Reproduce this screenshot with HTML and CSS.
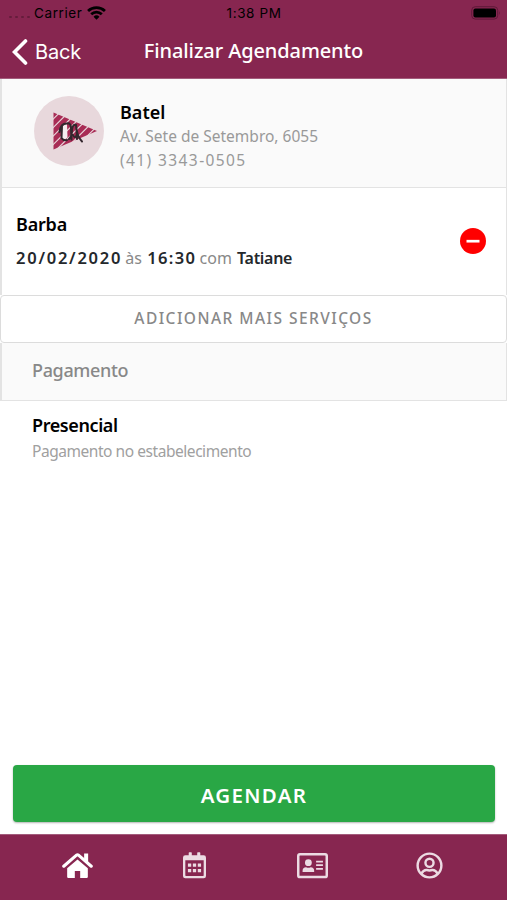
FILE: index.html
```html
<!DOCTYPE html>
<html lang="pt-BR">
<head>
  <meta charset="UTF-8">
  <title>Finalizar Agendamento</title>
  <link rel="stylesheet" href="styles.css">
</head>
<body>
  <div class="app">
    <header class="header">
      <div class="status-bar">
        <div class="carrier">
          <span class="signal"><i></i><i></i><i></i><i></i></span>
          <span class="carrier-name">Carrier</span>
          <svg class="wifi" viewBox="0 0 18 13">
            <path d="M1 4.500a11.600 11.600 0 0 1 16 0M4 7.700a7.200 7.200 0 0 1 10 0" fill="none" stroke="#000" stroke-width="2.600"/>
            <path d="M9 13 6.200 10.100a4 4 0 0 1 5.600 0z"/>
          </svg>
        </div>
        <span class="clock">1:38 PM</span>
        <svg class="battery" viewBox="0 0 30 14">
          <rect x=".7" y=".7" width="26" height="12.4" rx="3.6" fill="none" stroke="#5f1938" stroke-width="1"/>
          <rect x="2.4" y="2.4" width="22.6" height="9" rx="2"/>
          <path d="M28 5q1.500 2 0 4z" fill="#5f1938"/>
        </svg>
      </div>
      <div class="nav-bar">
        <a class="back">
          <svg viewBox="0 0 16 26"><path d="M13.500 2 2.500 13l11 11" fill="none" stroke="#fff" stroke-width="3.600" stroke-linecap="round"/></svg>
          <span>Back</span>
        </a>
        <h1 class="title">Finalizar Agendamento</h1>
      </div>
    </header>

    <main class="content">
      <section class="place">
        <svg class="avatar" viewBox="0 0 70 70">
          <defs>
            <clipPath id="flag"><path d="M19.500 16.500 63 35 19.500 53.500z"/></clipPath>
          </defs>
          <circle cx="35" cy="35" r="35" fill="#e8d8dc"/>
          <g clip-path="url(#flag)" stroke="#a82c55" stroke-width="4.800">
            <path d="M8 30 32 6M8 38.500 42 4.500M8 47 50 5M8 55.500 58 5.500M10 62 66 6M18.500 62 72 8.500M27 62 76 13M35.500 62 80 17.500"/>
          </g>
          <path d="M28 29.500q2-3 5-2l.5 14q-3 3-5.500 2z" fill="#f5edef"/>
          <g fill="none" stroke="#33272d" stroke-width="2" stroke-linecap="round">
            <path d="M25.500 36q1-9 8-8.500M28 30l-.5 12q2 3 5.500 2M33 27.500q4-1 4 5l.5 11M35 43q3-3 3-9 .5-6 4-5 1 9 1 14M39 39q2 5 4-1M42 29.500q1 11 6 16"/>
          </g>
        </svg>
        <div class="place-info">
          <h2 class="place-name">Batel</h2>
          <p class="address">Av. Sete de Setembro, 6055</p>
          <p class="phone">(41) 3343-0505</p>
        </div>
      </section>

      <section class="service">
        <div>
          <h3 class="service-name">Barba</h3>
          <p class="schedule"><b class="date">20/02/2020</b> às <b class="time">16:30</b> com <b class="person">Tatiane</b></p>
        </div>
        <svg class="remove" viewBox="0 0 26 26">
          <circle cx="13" cy="13" r="13" fill="#f00"/>
          <path d="M6.500 13.200h13" stroke="#fff" stroke-width="2.700"/>
        </svg>
      </section>

      <button class="add-btn">ADICIONAR MAIS SERVIÇOS</button>

      <div class="section-title">Pagamento</div>
      <section class="payment">
        <h3 class="payment-name">Presencial</h3>
        <p class="payment-text">Pagamento no estabelecimento</p>
      </section>
    </main>

    <button class="submit-btn">AGENDAR</button>

    <nav class="tabs">
      <a class="tab active">
        <svg viewBox="0 0 30 30">
          <path d="M15 9.200 25 17.600v8.600q0 .8-.8.800h-6.600v-6.600h-5.200V27H5.800q-.8 0-.8-.8v-8.600z"/>
          <path d="M21.400 3.400h3.900v9.600l-3.900-3.500z"/>
          <path d="M1.700 15.700 14 5q1-.8 2 0l12.300 10.700" fill="none" stroke="#fff" stroke-width="3" stroke-linecap="round"/>
        </svg>
      </a>
      <a class="tab">
        <svg viewBox="0 0 30 30">
          <path d="M5.500 4.500H9V2q0-.6.600-.6h2q.6 0 .6.600v2.500h5.600V2q0-.6.600-.6h2q.6 0 .6.600v2.500h3.500q2.400 0 2.400 2.400v18.900q0 2.400-2.400 2.400h-19q-2.400 0-2.400-2.400V6.900q0-2.400 2.400-2.400zM5.500 9.500v15.700q0 .6.600.600h17.800q.6 0 .6-.6V9.500z" fill-rule="evenodd"/>
          <path d="M8.200 13h3.400v3.400H8.200zm5.100 0h3.400v3.400h-3.400zm5.100 0h3.400v3.400h-3.400zM8.200 18.600h3.400V22H8.200zm5.100 0h3.400V22h-3.400zm5.100 0h3.400V22h-3.400z"/>
        </svg>
      </a>
      <a class="tab">
        <svg viewBox="0 0 30 30" class="wide">
          <rect x="1.200" y="4.200" width="27.600" height="22" rx="1.600" fill="none" stroke="#ecdbe3" stroke-width="2.400"/>
          <circle cx="11" cy="12.300" r="3.300"/>
          <path d="M5.400 21.400v-1.200q0-3.500 3.400-3.500 2.200 1 4.400 0 3.400 0 3.400 3.500v1.200z"/>
          <path d="M18.500 11.200h6.600M18.500 14.700h6.600M18.500 18.200h6.600" fill="none" stroke="#ecdbe3" stroke-width="1.700"/>
        </svg>
      </a>
      <a class="tab">
        <svg viewBox="0 0 30 30">
          <g fill="none" stroke="#ecdbe3" stroke-width="2.700">
            <circle cx="15" cy="15" r="13.200"/>
            <circle cx="15" cy="12" r="4.500"/>
            <path d="M6 24.200q2-4.300 5.600-4.300 3.400 1.200 6.800 0 3.600 0 5.600 4.300"/>
          </g>
        </svg>
      </a>
    </nav>
  </div>
</body>
</html>
```

FILE: styles.css
```css
:root {
  --primary: #872650;
  --green: #29a745;
  --border: #e3e3e3;
  --muted: #999;
}

* {
  margin: 0;
  padding: 0;
  box-sizing: border-box;
}

body {
  font-family: "Noto Sans", sans-serif;
  background: #fff;
  color: #000;
}

.app {
  height: 100vh;
  display: flex;
  flex-direction: column;
  overflow: hidden;
}

.header {
  height: 79px;
  background: var(--primary);
  border-bottom: 1px solid #a35c7c;
}

.status-bar {
  height: 26px;
  display: grid;
  grid-template-columns: 1fr auto 1fr;
  align-items: center;
  padding: 0 6px 0 9px;
  font-family: Inter, sans-serif;
  font-size: 13.5px;
  letter-spacing: 0.6px;
}

.carrier {
  display: flex;
  align-items: center;
}

.signal {
  display: flex;
  gap: 3px;
  width: 25px;
  padding-top: 8px;
}

.signal i {
  width: 3px;
  height: 2px;
  border-radius: 1px;
  background: #651c3b;
}

.clock {
  margin-right: 2px;
}

.wifi {
  width: 19px;
  height: 14px;
  margin-left: 5px;
}

.battery {
  width: 30px;
  height: 14px;
  justify-self: end;
}

.nav-bar {
  display: grid;
  grid-template-columns: 1fr auto 1fr;
  align-items: center;
  height: 52px;
  padding: 0 12px;
  color: #fff;
}

.back {
  display: flex;
  align-items: center;
  gap: 7px;
  font-family: Inter, sans-serif;
  font-size: 20px;
  letter-spacing: -0.2px;
}

.back svg {
  width: 16px;
  height: 26px;
}

.title {
  font-size: 20px;
  font-weight: 500;
  letter-spacing: -0.1px;
  line-height: 26px;
  padding-bottom: 2px;
}

.content {
  flex: 1;
}

.place {
  display: flex;
  height: 109px;
  padding: 17px 32px 0;
  gap: 16px;
  background: #fafafa;
  border: solid var(--border);
  border-width: 0 1px 1px 2px;
}

.avatar {
  width: 70px;
  height: 70px;
}

.place-info {
  padding-top: 4px;
  line-height: 24px;
}

.place-name,
.service-name,
.payment-name {
  font-size: 18px;
  font-weight: 600;
}

.address,
.phone {
  color: var(--muted);
  font-size: 15.5px;
  font-weight: 400;
}

.phone {
  letter-spacing: 1.4px;
}

.service {
  display: flex;
  align-items: center;
  justify-content: space-between;
  height: 107px;
  padding: 0 20px 2px 14px;
  border: solid var(--border);
  border-width: 0 1px 0 2px;
}

.service-name {
  line-height: 34px;
  letter-spacing: -0.2px;
}

.schedule {
  color: #888;
  font-size: 16px;
  line-height: 34px;
}

.schedule b {
  color: #24282c;
  font-weight: 600;
}

.schedule .date {
  font-size: 16.5px;
  letter-spacing: 1.75px;
  margin-right: -1px;
}

.schedule .time {
  font-size: 16.5px;
  letter-spacing: 1.4px;
  margin-left: 1px;
  margin-right: -1px;
}

.schedule .person {
  margin-left: 1px;
  letter-spacing: -0.3px;
}

.remove {
  width: 26px;
  height: 26px;
}

.add-btn {
  display: block;
  width: 100%;
  height: 48px;
  background: #fff;
  border: 1px solid #dcdcdc;
  border-radius: 4px;
  color: #888;
  font-family: inherit;
  font-size: 15.5px;
  font-weight: 500;
  letter-spacing: 1.45px;
  padding-bottom: 2px;
}

.section-title {
  height: 58px;
  padding-left: 30px;
  background: #fafafa;
  border: solid var(--border);
  border-width: 0 1px 1px 2px;
  color: #888;
  font-size: 18px;
  font-weight: 500;
  letter-spacing: -0.35px;
  line-height: 55px;
}

.payment {
  padding: 11px 32px;
  line-height: 26px;
}

.payment-name {
  letter-spacing: -0.4px;
}

.payment-text {
  color: #a0a0a0;
  font-size: 15.5px;
  font-weight: 400;
  letter-spacing: -0.45px;
}

.submit-btn {
  height: 57px;
  margin: 0 12px 12px 13px;
  background: var(--green);
  border: none;
  border-radius: 4px;
  box-shadow: 0 1px 2px rgba(0, 0, 0, 0.3);
  color: #fff;
  font-family: inherit;
  font-size: 20.5px;
  font-weight: 600;
  letter-spacing: 1.3px;
  padding-top: 3px;
}

.tabs {
  display: flex;
  height: 66px;
  padding: 0 19px;
  background: var(--primary);
  border-top: 1px solid #a35c7c;
}

.tab {
  flex: 1;
  display: flex;
  justify-content: center;
  padding-top: 16px;
  fill: #ecdbe3;
}

.tab.active {
  fill: #fff;
}

.tab svg {
  width: 29px;
  height: 29px;
}

.tab:last-child svg {
  width: 27px;
  height: 27px;
  margin-top: 1px;
}

.tab.active svg,
.tab .wide {
  width: 31px;
  height: 31px;
  margin-top: -1px;
}
```
